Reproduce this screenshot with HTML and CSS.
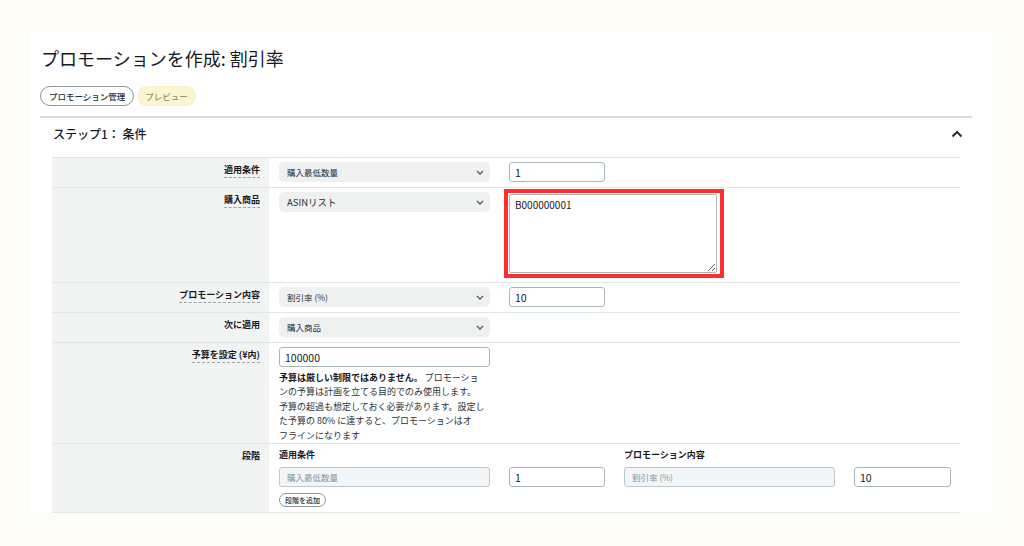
FILE: index.html
```html
<!DOCTYPE html>
<html lang="ja">
<head>
<meta charset="utf-8">
<title>プロモーションを作成</title>
<link rel="stylesheet" href="styles.css">
</head>
<body>
<div class="card">
  <h1 class="title">プロモーションを作成: 割引率</h1>
  <div class="pills">
    <span class="pill">プロモーション管理</span>
    <span class="pill pill-preview">プレビュー</span>
  </div>
  <section class="step">
    <div class="step-head">
      <span class="step-title">ステップ1： 条件</span>
      <svg class="caret-up" width="12" height="8" viewBox="0 0 12 8"><path d="M1.5 6.5 L6 2 L10.5 6.5" fill="none" stroke="#232f3e" stroke-width="2"/></svg>
    </div>
    <div class="form">
      <div class="row">
        <div class="label"><span class="ul">適用条件</span></div>
        <div class="field">
          <div class="select"><span>購入最低数量</span><svg class="chev" width="8" height="5" viewBox="0 0 8 5"><path d="M1 1 L4 4 L7 1" fill="none" stroke="#545b64" stroke-width="1.3"/></svg></div>
          <div class="input">1</div>
        </div>
      </div>
      <div class="row">
        <div class="label"><span class="ul">購入商品</span></div>
        <div class="field">
          <div class="select"><span class="latin">ASINリスト</span><svg class="chev" width="8" height="5" viewBox="0 0 8 5"><path d="M1 1 L4 4 L7 1" fill="none" stroke="#545b64" stroke-width="1.3"/></svg></div>
          <div class="highlight"><textarea class="textarea">B000000001</textarea></div>
        </div>
      </div>
      <div class="row">
        <div class="label"><span class="ul">プロモーション内容</span></div>
        <div class="field">
          <div class="select"><span>割引率 (%)</span><svg class="chev" width="8" height="5" viewBox="0 0 8 5"><path d="M1 1 L4 4 L7 1" fill="none" stroke="#545b64" stroke-width="1.3"/></svg></div>
          <div class="input">10</div>
        </div>
      </div>
      <div class="row">
        <div class="label"><span class="plain">次に適用</span></div>
        <div class="field">
          <div class="select"><span>購入商品</span><svg class="chev" width="8" height="5" viewBox="0 0 8 5"><path d="M1 1 L4 4 L7 1" fill="none" stroke="#545b64" stroke-width="1.3"/></svg></div>
        </div>
      </div>
      <div class="row">
        <div class="label"><span class="ul">予算を設定 (¥内)</span></div>
        <div class="field field-col">
          <div class="input input-wide">100000</div>
          <p class="help"><b>予算は厳しい制限ではありません。</b> プロモーショ<br>ンの予算は計画を立てる目的でのみ使用します。<br>予算の超過も想定しておく必要があります。設定し<br>た予算の 80% に達すると、プロモーションはオ<br>フラインになります</p>
        </div>
      </div>
      <div class="row">
        <div class="label"><span class="plain">段階</span></div>
        <div class="field tiers">
          <div class="tier-h">適用条件</div>
          <div></div>
          <div class="tier-h">プロモーション内容</div>
          <div></div>
          <div class="disabled">購入最低数量</div>
          <div class="input">1</div>
          <div class="disabled">割引率 (%)</div>
          <div class="input">10</div>
          <div class="tier-actions"><span class="pill pill-small">段階を追加</span></div>
        </div>
      </div>
    </div>
  </section>
</div>
</body>
</html>
```
FILE: styles.css
```css
* { box-sizing: border-box; }
html, body { margin: 0; padding: 0; }
body {
  background: #fdfcf7;
  font-family: "Noto Sans CJK JP", "Noto Sans", sans-serif;
  color: #16191f;
  width: 1024px;
  height: 546px;
  overflow: hidden;
}
.card {
  margin: 32px 0 0 30px;
  width: 963px;
  height: 481px;
  background: #fff;
  padding: 14px 21px 0 10px;
}
.title {
  margin: 0 0 0 1px;
  font-size: 18px;
  line-height: 24px;
  font-weight: 400;
  color: #16191f;
}
.pills {
  display: flex;
  gap: 3px;
  margin-top: 16px;
}
.pill {
  display: inline-flex;
  align-items: center;
  justify-content: center;
  height: 20px;
  padding: 0 8px;
  border: 1px solid #8d9699;
  border-radius: 10px;
  font-size: 8.5px;
  font-weight: 500;
  color: #232f3e;
  background: #fff;
  line-height: 1;
  white-space: nowrap;
}
.pill-preview {
  background: #fdf5cf;
  border-color: #fbf0c2;
  color: #9c9171;
  padding: 0 7px;
}
.pill-small {
  height: 14px;
  padding: 0 5px;
  font-size: 7px;
  border-radius: 7px;
}
.step {
  margin-top: 10px;
  border-top: 2px solid #d5dbdb;
}
.step-head {
  height: 39px;
  display: flex;
  justify-content: space-between;
  align-items: flex-start;
  padding: 6px 9px 0 13px;
}
.step-title {
  font-size: 12px;
  line-height: 20px;
  font-weight: 500;
}
.caret-up { margin-top: 6px; }
.form {
  margin: 0 12px;
  border-top: 1px solid #e3e6e6;
}
.row {
  display: grid;
  grid-template-columns: 217px 1fr;
  border-bottom: 1px solid #e3e6e6;
}
.label {
  background: #f2f3f3;
  text-align: right;
  padding: 5px 9px 0 0;
  font-size: 9px;
  line-height: 13px;
  font-weight: 700;
}
.ul {
  border-bottom: 1px dashed #9aa5a6;
  padding-bottom: 1px;
}
.field {
  display: flex;
  align-items: flex-start;
  gap: 19px;
  padding: 4px 9px 5px 10px;
}
.field-col {
  flex-direction: column;
  gap: 0;
  padding-bottom: 0;
}
.select {
  width: 211px;
  height: 20px;
  background: #eff1f1;
  border-radius: 5px;
  display: flex;
  align-items: center;
  justify-content: space-between;
  padding: 0 6px 0 8px;
  font-size: 8.5px;
  color: #232f3e;
}
.select .latin { font-size: 9.5px; }
.input {
  width: 96px;
  height: 20px;
  border: 1px solid #aab7b8;
  border-radius: 3px;
  background: #fff;
  display: flex;
  align-items: center;
  padding: 0 5px;
  font-size: 10.5px;
  color: #16191f;
}
.input-wide { width: 211px; }
.highlight {
  margin: -3px 0 -1px -5px;
  border: 4px solid #ff2e2e;
  padding: 1px 1px 0 1px;
  width: 220px;
  height: 89px;
}
.textarea {
  display: block;
  width: 208px;
  height: 79px;
  border: 1px solid #aab7b8;
  border-radius: 2px;
  padding: 3px 5px;
  font-family: "Noto Sans CJK JP", "Noto Sans", sans-serif;
  font-size: 10px;
  line-height: 14px;
  color: #16191f;
  resize: both;
  outline: none;
}
.help {
  margin: 4px 0 0 0;
  font-size: 9px;
  line-height: 14.4px;
  color: #2c3338;
  white-space: nowrap;
}
.help b { color: #16191f; }
.tiers {
  display: grid;
  grid-template-columns: 211px 96px 211px 97px;
  column-gap: 19px;
  row-gap: 0;
  padding-top: 4px;
}
.tier-h {
  font-size: 9px;
  font-weight: 700;
  line-height: 14px;
  margin-bottom: 5px;
}
.tiers .input { width: auto; }
.tier-actions { margin-top: 6px; height: 14px; display: flex; }
.disabled {
  height: 20px;
  background: #f2f6f8;
  border: 1px solid #bfc8cb;
  border-radius: 3px;
  display: flex;
  align-items: center;
  padding: 0 7px;
  font-size: 8.5px;
  color: #8a9597;
}
```
